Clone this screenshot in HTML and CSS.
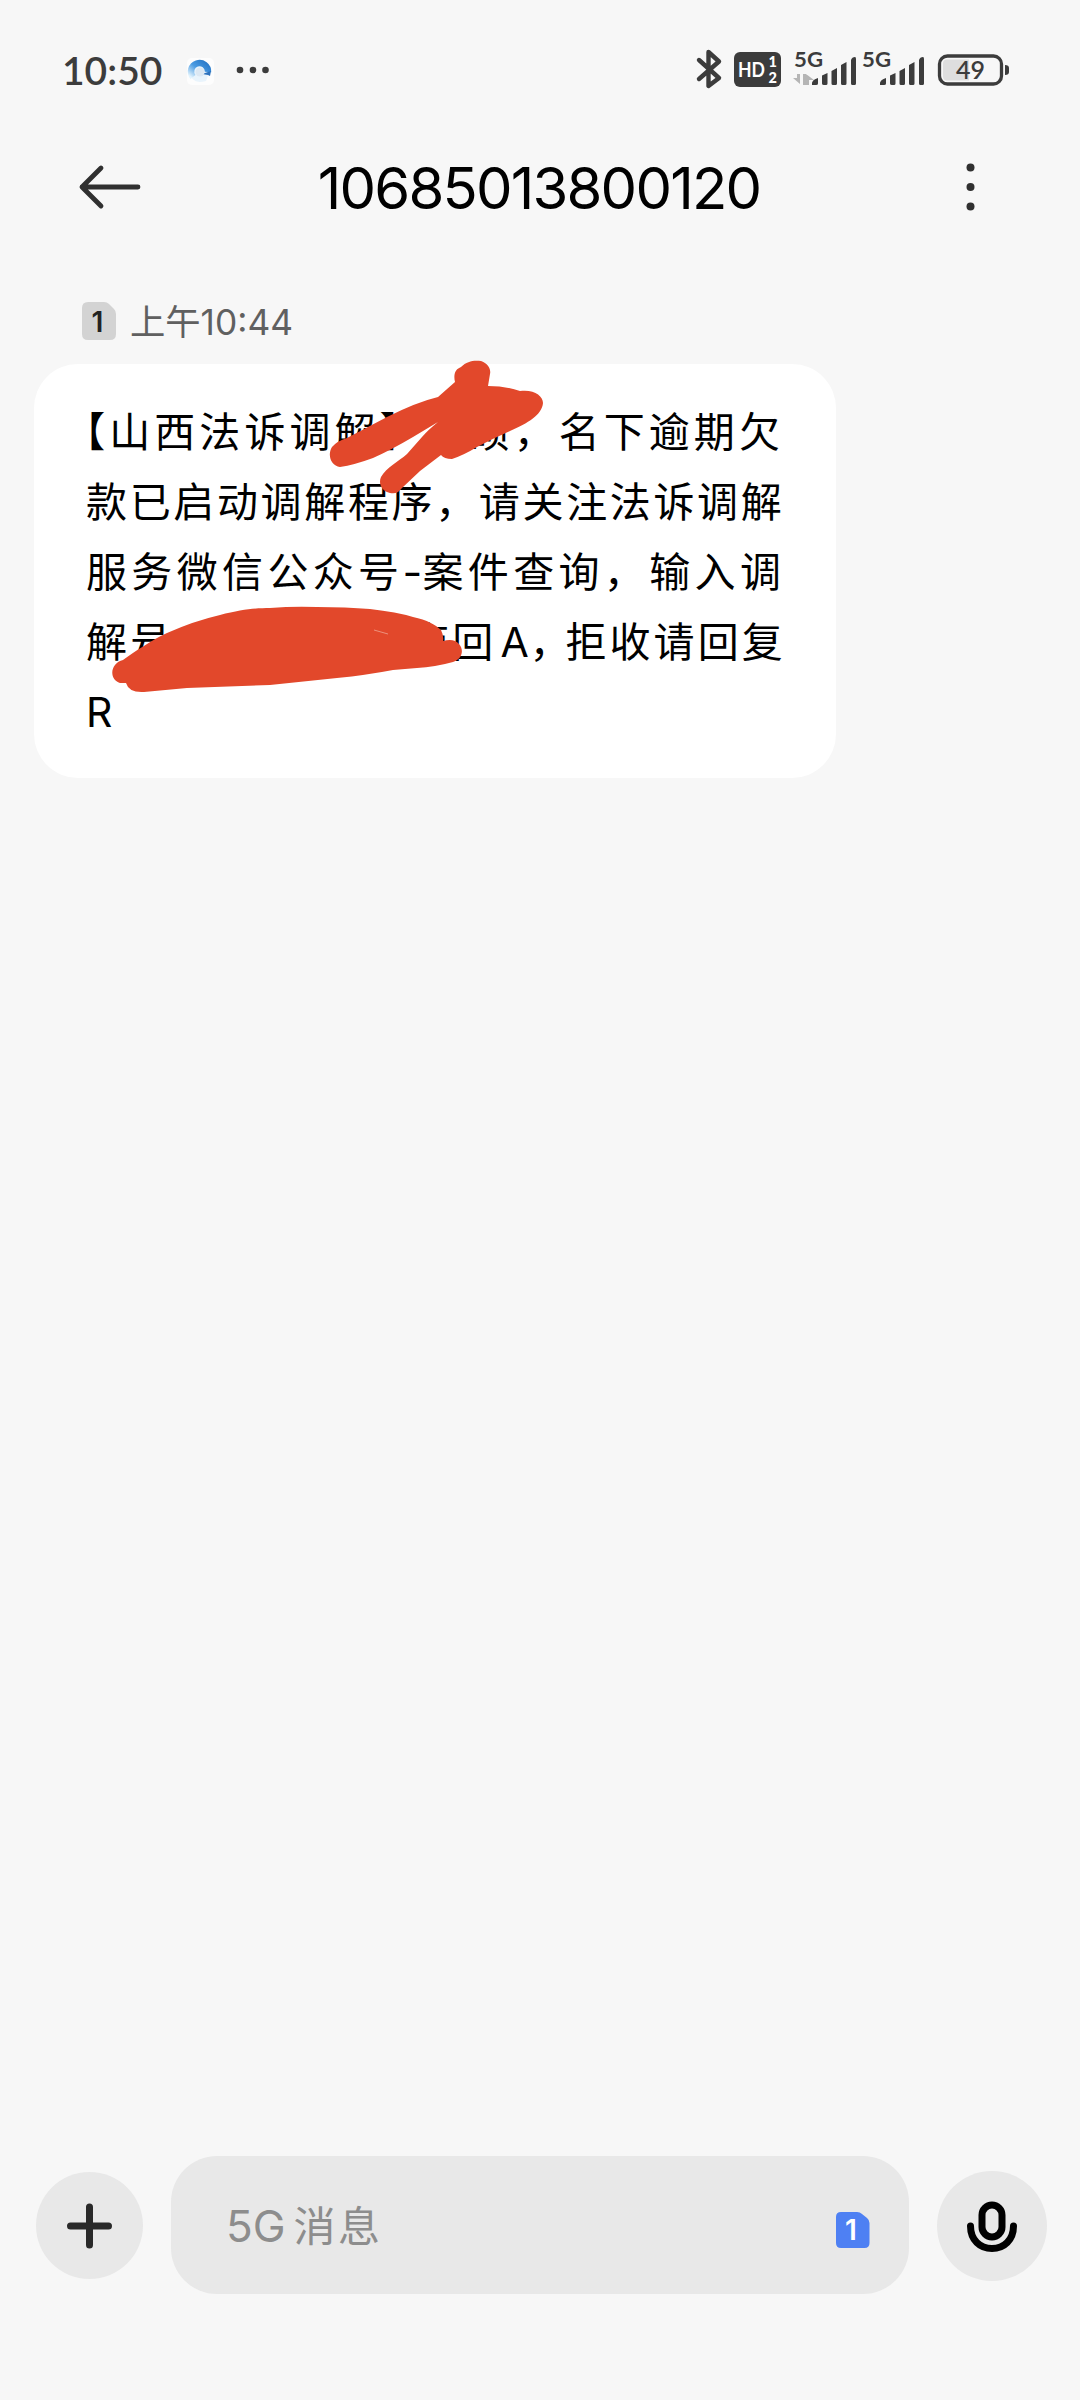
FILE: index.html
```html
<!DOCTYPE html>
<html lang="zh-CN">
<head>
<meta charset="utf-8">
<title>10685013800120</title>
<link rel="stylesheet" href="styles.css">
</head>
<body>
<div class="screen">
  <div class="status">
    <span class="clock">10:50</span>
    <svg class="browser" width="30" height="30" viewBox="0 0 30 30">
      <defs><linearGradient id="ring" x1="1" y1="0" x2="0" y2="1"><stop offset="0" stop-color="#2878c8"/><stop offset=".5" stop-color="#4a9be2"/><stop offset="1" stop-color="#e2f3fd"/></linearGradient></defs>
      <rect x="1" y="1" width="27" height="27" rx="5" fill="#fdfdfd"/>
      <path d="M20 24Q5 28 4 15A10 10 0 0 1 24 13" fill="#e9f4fc"/>
      <path d="M7 20A8.5 8.5 0 1 1 22 15" fill="none" stroke="url(#ring)" stroke-width="6.5"/>
      <path d="M16 17 25 14 24 19 22 18Z" fill="#2d72bd"/>
      <circle cx="14" cy="15" r="4.5" fill="#dce8f3"/>
    </svg>
    <svg class="more" width="34" height="8" viewBox="0 0 34 8" fill="#3c3c3c"><circle cx="4" cy="4" r="3.3"/><circle cx="17" cy="4" r="3.3"/><circle cx="29.500" cy="4" r="3.3"/></svg>
    <svg class="radios" width="320" height="44" viewBox="0 0 320 44" fill="#3c3c3c">
      <path d="M5 12 25 30 14.500 38V4L25 13.500 5 31" fill="none" stroke="#3c3c3c" stroke-width="4.400" stroke-linejoin="round" stroke-linecap="round"/>
      <rect x="40" y="4" width="47" height="35" rx="6"/>
      <text class="hd" x="44" y="29" textLength="27" lengthAdjust="spacingAndGlyphs">HD</text>
      <text class="hd-sub" x="74.500" y="19">1</text>
      <text class="hd-sub" x="74.500" y="35">2</text>
      <text class="gen" x="100" y="19" textLength="29" lengthAdjust="spacingAndGlyphs">5G</text>
      <path d="M106 26V36L99 30H103V26ZM109 37V26L112.500 26V37ZM112 26 120 32H115V37H112Z" fill="#b5b5b5"/>
      <path id="bars" d="M118 37Q117 32 124 30V35.500Q124 37 122 37ZM128 27.500 133.500 25V35.500Q133.500 37 132 37H130Q128 37 128 35.500ZM137.500 23 143 20V35.500Q143 37 141.500 37H139Q137.500 37 137.500 35.500ZM147 17 152.500 14V35.500Q152.500 37 151 37H148.500Q147 37 147 35.500ZM157 12Q158 9 161 9Q162 9 162 11V35.500Q162 37 160.500 37H158.500Q157 37 157 35.500Z"/>
      <text class="gen" x="168" y="19" textLength="29" lengthAdjust="spacingAndGlyphs">5G</text>
      <use href="#bars" x="68"/>
      <rect x="245.500" y="8" width="62" height="28" rx="8" fill="none" stroke="#3c3c3c" stroke-width="3.300"/>
      <path d="M253 11.500H275V32.500H253Q249 32.500 249 28.500V15.500Q249 11.500 253 11.500Z" fill="#dedede"/>
      <path d="M311 17Q315 17 315 20V24Q315 27 311 27Z"/>
      <text class="charge" x="262" y="31" textLength="29" lengthAdjust="spacingAndGlyphs">49</text>
    </svg>
  </div>
  <header class="header">
    <svg width="64" height="44" viewBox="0 0 64 44" fill="none" stroke="#303030" stroke-width="4.800" stroke-linecap="round" stroke-linejoin="round"><path d="M25 3 6 22 25 41M6 22H62"/></svg>
    <h1 class="title">10685013800120</h1>
    <svg width="8" height="48" viewBox="0 0 8 48" fill="#303030"><circle cx="3.500" cy="4.500" r="4"/><circle cx="3.500" cy="24" r="4"/><circle cx="3.500" cy="43.500" r="4"/></svg>
  </header>
  <main class="thread">
    <div class="stamp">
      <svg width="34" height="38" viewBox="0 0 34 38"><path d="M6 0H22Q25 0 27 2L32 7Q34 9 34 12V32Q34 38 28 38H6Q0 38 0 32V6Q0 0 6 0Z" fill="#d3d3d3"/><text class="sim" x="9.500" y="30">1</text></svg>
      <span class="time">上午10:44</span>
    </div>
    <div class="bubble">
      <p class="line l1"><span>【山西法诉调解】</span><span class="name">硕，名下逾期欠</span></p>
      <p class="line l2">款已启动调解程序，请关注法诉调解</p>
      <p class="line l3"><span>服务微信公众号</span><span class="dash">-</span><span>案件查询，输入调</span></p>
      <p class="line l4"><span>解号</span><span class="reply">商回</span><span class="option">A</span><span class="tight">，</span><span>拒收请回复</span></p>
      <p class="line">R</p>
      <svg class="marker" width="520" height="340" viewBox="34 364 520 340" fill="#e2482b">
        <path d="M340 467C331 466 327 455 332 447Q337 441 347 438L387 417Q417 402 438 397L455 382C453 373 456 369 461 367C467 361 474 360 481 361C489 364 491 370 490 374L488 386Q506 386 520 391C534 389 543 396 543 403C542 415 528 423 510 431Q494 438 477 447Q464 455 452 459Q444 459 441 455L420 471L402 488C398 493 395 494 390 493C382 491 378 484 381 477C386 468 399 461 407 454L422 437Q428 430 438 422L413 437Q391 450 373 458Q354 465 340 467Z"/>
        <path d="M120 683C112 681 110 671 115 665Q118 661 123 660C136 651 150 641 167 633Q194 621 220 615C243 609 258 608 270 608Q294 606 317 607Q346 607 370 609Q397 612 413 617C427 620 436 625 441 630Q444 636 443 641Q454 638 459 644C465 651 461 660 453 662Q435 667 417 668L393 670Q367 675 337 678L270 685L187 688L144 692Q129 693 126 683Z"/>
        <path d="M374 630 388 634" fill="none" stroke="#efa391" stroke-width=".8"/>
      </svg>
    </div>
  </main>
  <footer class="composer">
    <div class="round plus"><svg width="46" height="46" viewBox="0 0 46 46" stroke="#292929" stroke-width="7" stroke-linecap="round"><path d="M22.500 4V42M3.500 23H41.500"/></svg></div>
    <div class="field">
      <div class="hint"><span class="net">5G</span><span class="word">消息</span></div>
      <svg class="card" width="34" height="38" viewBox="0 0 34 38"><path d="M5 1H21Q24 1 26 3L31 7Q33.500 9 33.500 12V32Q33.500 37 28.500 37H5Q0 37 0 32V6Q0 1 5 1Z" fill="#4e80f3"/><text class="sim sim-blue" x="9" y="29">1</text></svg>
    </div>
    <div class="round mic"><svg width="52" height="54" viewBox="0 0 52 54" fill="none" stroke="#000" stroke-width="7" stroke-linecap="round"><rect x="16" y="6" width="20" height="32" rx="10"/><path d="M4.500 27C4.500 41 14 49.500 26 49.500S47.500 41 47.500 27"/></svg></div>
  </footer>
</div>
</body>
</html>
```
FILE: styles.css
```css
* { box-sizing: border-box; }
body { margin: 0; background: #f7f7f7; font-family: Inter, "Noto Sans CJK SC", sans-serif; }
p, h1 { margin: 0; }
svg { display: block; flex: none; overflow: visible; }
.screen { width: 1080px; height: 2400px; display: flex; flex-direction: column; }

.status { height: 140px; padding: 48px 66px 0 62px; display: flex; align-items: flex-start; color: #3c3c3c; }
.clock { width: 124px; font: 600 39px/44px Lato, sans-serif; }
.browser { margin-top: 9px; }
.more { margin: 18px 0 0 20px; }
.radios { margin-left: auto; }
.hd { font: 700 20.500px Lato, sans-serif; fill: #fff; }
.hd-sub { font: 900 14.500px Lato, sans-serif; fill: #fff; }
.gen { font: 700 20px Lato, sans-serif; }
.charge { font: 600 25px Lato, sans-serif; }

.header { height: 100px; padding: 0 105px 6px 76px; display: flex; align-items: center; }
.title { flex: 1; padding: 1px 29px 0 0; font-size: 58px; line-height: 70px; font-weight: 400; letter-spacing: -1.800px; text-align: center; white-space: nowrap; color: #000; }

.thread { flex: 1; padding: 62px 34px 0; }
.stamp { height: 38px; margin-left: 48px; display: flex; align-items: center; gap: 14px; color: #606060; }
.sim { font: 600 28px Inter, sans-serif; fill: #222; }
.sim-blue { fill: #fff; }
.time { padding-top: 3px; font-size: 35.300px; line-height: 38px; white-space: nowrap; }

.bubble { position: relative; width: 802px; height: 414px; margin-top: 24px; padding: 33px 48px 0 52px; border-radius: 44px; background: #fff; color: #000; }
.line { height: 70px; display: flex; font-size: 41px; line-height: 70px; white-space: nowrap; text-spacing-trim: space-all; }
.l1 { margin-left: -21.800px; letter-spacing: 4.050px; }
.l2 { letter-spacing: 2.650px; }
.l3 { letter-spacing: 4.350px; }
.l4 { letter-spacing: 3.100px; }
.name { margin-left: 44px; }
.dash { width: 19px; transform: scaleX(1.05); }
.reply { margin-left: 234px; }
.option { width: 33px; padding-left: 4px; }
.tight { width: 36px; }
.marker { position: absolute; left: 0; top: 0; }

.composer { height: 244px; padding: 0 33px 0 36px; display: flex; align-items: flex-start; }
.round { display: flex; align-items: center; justify-content: center; border-radius: 50%; background: #e8e8e8; }
.plus { width: 107px; height: 107px; margin-top: 16px; }
.mic { width: 110px; height: 110px; margin-top: 15px; }
.field { width: 738px; height: 138px; margin: 0 28px; padding: 0 39px 0 55px; display: flex; align-items: center; justify-content: space-between; border-radius: 46px; background: #e8e8e8; color: #8d8d8d; }
.hint { display: flex; align-items: baseline; gap: 8px; padding-bottom: 4px; }
.net { font-size: 44px; }
.word { font-size: 42px; letter-spacing: 2.500px; }
.card { margin-top: 9px; }
```
